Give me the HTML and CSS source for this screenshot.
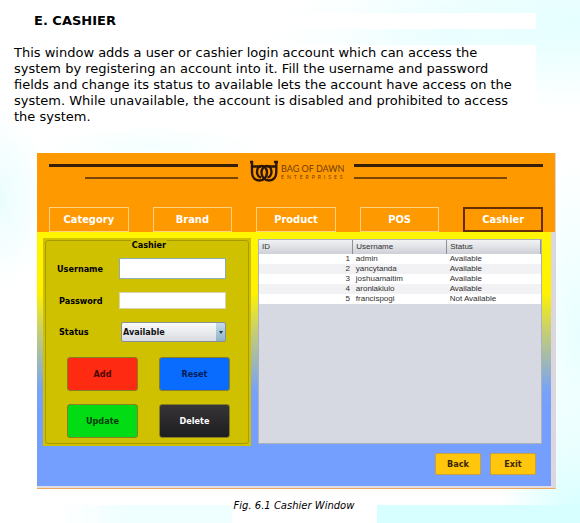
FILE: index.html
```html
<!DOCTYPE html>
<html lang="en">
<head>
<meta charset="utf-8">
<title>Cashier</title>
<link rel="stylesheet" href="styles.css">
</head>
<body>
<main class="page">
  <h1 class="heading">E. CASHIER</h1>
  <p class="intro">This window adds a user or cashier login account which can access the<br>system by registering an account into it. Fill the username and password<br>fields and change its status to available lets the account have access on the<br>system. While unavailable, the account is disabled and prohibited to access<br>the system.</p>
  <figure class="figure">
    <div class="window">
      <header class="top">
        <div class="brand-row">
          <div class="lines lines-left"><span class="thick"></span><span class="thin"></span></div>
          <div class="logo">
            <svg class="mark" viewBox="0 0 28 22" aria-hidden="true" fill="none" stroke="#2b1608" stroke-width="2.4">
              <path d="M0 2H3M2 1V12C2 17 5 20.500 9.500 20.500C14 20.500 17 17 17 12.500C17 9 15 6 11.500 6C8.500 6 7 9 7 12C7 15 9 17.500 11 17.500"/>
              <path d="M24 2H28M26.300 1V12C26.300 17 23.500 20.500 19 20.500C14.500 20.500 11.500 17 11.500 12.500C11.500 9 13.500 6 17 6C20 6 21.500 9 21.500 12C21.500 15 19.500 17.500 17.500 17.500"/>
              <path d="M2 6.500H11M17.500 6.500H26"/>
            </svg>
            <div class="name"><span class="name-main">BAG OF DAWN</span><span class="name-sub">ENTERPRISES</span></div>
          </div>
          <div class="lines lines-right"><span class="thick"></span><span class="thin"></span></div>
        </div>
        <nav class="tabs">
          <button type="button" class="tab">Category</button>
          <button type="button" class="tab">Brand</button>
          <button type="button" class="tab">Product</button>
          <button type="button" class="tab">POS</button>
          <button type="button" class="tab active">Cashier</button>
        </nav>
      </header>
      <div class="body">
        <div class="content">
          <form class="panel">
            <div class="panel-frame">
              <h2 class="panel-title">Cashier</h2>
              <div class="fields">
                <label for="username">Username</label>
                <input class="text tall" id="username" type="text">
                <label class="indent" for="password">Password</label>
                <input class="text" id="password" type="password">
                <label class="indent" for="status">Status</label>
                <div class="select-wrap">
                  <select id="status"><option>Available</option><option>Not Available</option></select>
                </div>
              </div>
              <div class="actions">
                <button type="button" class="action add">Add</button>
                <button type="button" class="action reset">Reset</button>
                <button type="button" class="action update">Update</button>
                <button type="button" class="action delete">Delete</button>
              </div>
            </div>
          </form>
          <div class="table-area">
            <table>
              <thead><tr><th>ID</th><th>Username</th><th>Status</th></tr></thead>
              <tbody>
                <tr><td>1</td><td>admin</td><td>Available</td></tr>
                <tr><td>2</td><td>yancytanda</td><td>Available</td></tr>
                <tr><td>3</td><td>joshuamaitim</td><td>Available</td></tr>
                <tr><td>4</td><td>aronlakiulo</td><td>Available</td></tr>
                <tr><td>5</td><td>francispogi</td><td>Not Available</td></tr>
              </tbody>
            </table>
          </div>
        </div>
        <div class="footer">
          <button type="button" class="nav-btn">Back</button>
          <button type="button" class="nav-btn">Exit</button>
        </div>
      </div>
    </div>
    <figcaption class="caption">Fig. 6.1 Cashier Window</figcaption>
  </figure>
</main>
</body>
</html>
```
FILE: styles.css
```css
* { box-sizing: border-box; }

html { min-height: 100%; background: #fff; }

body {
  margin: 0;
  min-height: 100vh;
  font-family: Verdana, "DejaVu Sans", sans-serif;
  color: #000;
  background:
    radial-gradient(ellipse 240px 90px at 100% 4%, #e4ffff, transparent),
    radial-gradient(ellipse 180px 60px at 78% 6%, #effeff, transparent),
    radial-gradient(ellipse 110px 20px at 26% 28%, #f4fefe, transparent),
    radial-gradient(ellipse 50px 90px at 0 38%, #ebfdff, transparent),
    radial-gradient(ellipse 60px 180px at 100% 64%, #e8ffff, transparent),
    linear-gradient(#d7ffff, #d7ffff) right bottom / 35% 18px no-repeat,
    linear-gradient(90deg, transparent, #effeff 40%) 60px 100% / 172px 18px no-repeat,
    radial-gradient(ellipse 80px 140px at 100% 100%, #d2ffff, transparent),
    #fff;
}

.page { padding: 13px 44px 0 14px; }

.heading {
  margin: 0 0 16px;
  padding-left: 20px;
  background: linear-gradient(90deg, transparent, #fff 60%);
  font-size: 13px;
  line-height: 16px;
}

.intro {
  margin: 0;
  background: #fff;
  font-size: 13px;
  line-height: 16px;
  white-space: nowrap;
}

.figure { margin: 28px -20px 0 23px; }

.window {
  border-right: 1px solid #dcd6df;
  border-bottom: 1px solid #e8a860;
  background: #ff9900;
}

.top { padding: 11px 12px 0; }

.brand-row {
  display: grid;
  grid-template-columns: 1fr 100px 1fr;
  gap: 8px;
  height: 43px;
}

.lines { display: flex; flex-direction: column; gap: 10px; }
.thick { height: 3px; background: #382008; }
.thin { width: 81%; height: 2px; background: #7a4308; }
.lines-left .thin { align-self: flex-end; }

.logo {
  display: flex;
  align-items: center;
  gap: 3px;
  height: 22px;
  margin-top: -4px;
  padding-left: 4px;
}
.mark { flex: none; width: 28px; height: 22px; }

.name {
  display: flex;
  flex-direction: column;
  color: #6f3d06;
  white-space: nowrap;
  font-family: Lato, sans-serif;
}
.name-main { font-size: 9px; line-height: 11px; }
.name-sub { font-size: 5px; line-height: 6px; letter-spacing: 3px; }

.tabs { display: grid; grid-template-columns: repeat(5, 1fr); gap: 24px; }

.tab {
  height: 25px;
  padding: 0;
  border: 1px solid #ffd080;
  background: transparent;
  color: #fff;
  font: bold 11px/23px "DejaVu Sans Condensed", "DejaVu Sans", sans-serif;
}
.active { border: 2px solid #642c08; line-height: 21px; }

.body {
  padding: 6px 9px 11px 6px;
  border-right: 4px solid #dcd6df;
  border-bottom: 2px solid #e4dce0;
  background: linear-gradient(#fff600 0, #fff200 24%, #c9d06c 38%, #79a3f5 62%, #759fff 70%);
}

.content { display: grid; grid-template-columns: 207fr 285fr; gap: 7px; }

.panel {
  padding: 2px;
  background: #cfc100;
  font: bold 9px/12px "DejaVu Sans Condensed", "DejaVu Sans", sans-serif;
}
.panel-frame {
  height: 204px;
  padding: 0 18px 3px 11px;
  border: 1px solid #a89b00;
  border-radius: 3px;
}
.panel-title {
  width: 36px;
  margin: -1px auto 8px 74px;
  background: #cfc100;
  font: inherit;
  line-height: 10px;
  text-align: center;
}

.fields {
  display: grid;
  grid-template-columns: 62px 1fr;
  grid-template-rows: 21px 17px 20px;
  row-gap: 13px;
  align-items: center;
  padding-right: 4px;
}
.indent { padding-left: 2px; }
.text {
  width: 100%;
  height: 17px;
  border: 1px solid #d8d5ad;
  padding: 0 3px;
  background: #fff;
  font: inherit;
}
.tall { height: 21px; border: 1px solid #8bacb0; }

.select-wrap {
  display: grid;
  grid-template-columns: 1fr 10px;
  align-items: center;
  margin-left: 2px;
}
.select-wrap::after {
  content: "";
  grid-area: 1 / 2;
  justify-self: center;
  margin-right: 1px;
  border: 2px solid transparent;
  border-top: 3px solid #174050;
  border-bottom: 0;
  pointer-events: none;
}
select {
  grid-area: 1 / 1 / 2 / 3;
  appearance: none;
  width: 100%;
  height: 20px;
  padding: 0 1px;
  border: 1px solid #85919c;
  border-radius: 2px;
  background:
    linear-gradient(#c4dce8, #8fb3c6) right / 9px 100% no-repeat,
    linear-gradient(#fafafa, #d8dbe0);
  color: #111;
  font: inherit;
}

.actions {
  display: grid;
  grid-template-columns: 71px 71px;
  gap: 13px 21px;
  margin: 15px 0 0 10px;
}
.action {
  height: 34px;
  padding: 0;
  border: 1px solid #877f20;
  border-radius: 3px;
  font: inherit;
}
.add { background: #ff2a12; color: #480800; }
.reset { background: #0a6cff; color: #001c58; }
.update { background: #02dc14; color: #003c08; }
.delete { background: linear-gradient(#363437, #1e1d20); color: #fff; }

.table-area { margin-top: 1px; height: 205px; border: 1px solid #aeb1bb; background: #d6d9e2; }
table {
  width: 100%;
  table-layout: fixed;
  border-collapse: collapse;
  font: 8px/10px "Liberation Sans", sans-serif;
  color: #303030;
}
th {
  height: 14px;
  padding: 0 3px;
  border-right: 1px solid #8e9098;
  background: linear-gradient(#f2f2f4, #cfd0d7);
  font-weight: normal;
  text-align: left;
}
td { height: 10px; padding: 0 3px; white-space: nowrap; }
td:first-child { text-align: right; }
tbody tr { background: #fff; }
tbody tr:nth-child(even) { background: #f2f2f4; }

.footer { display: flex; justify-content: flex-end; gap: 9px; padding: 7px 6px 0 0; }
.nav-btn {
  width: 46px;
  height: 22px;
  padding: 0;
  border: 1px solid #c8a040;
  border-radius: 2px;
  background: #ffc60c;
  color: #3c2600;
  font: bold 9px/12px "DejaVu Sans Condensed", "DejaVu Sans", sans-serif;
}

.caption {
  margin-right: 20px;
  padding: 9px 0 2px 15px;
  font-size: 10px;
  line-height: 16px;
  font-style: italic;
  text-align: center;
}
```
